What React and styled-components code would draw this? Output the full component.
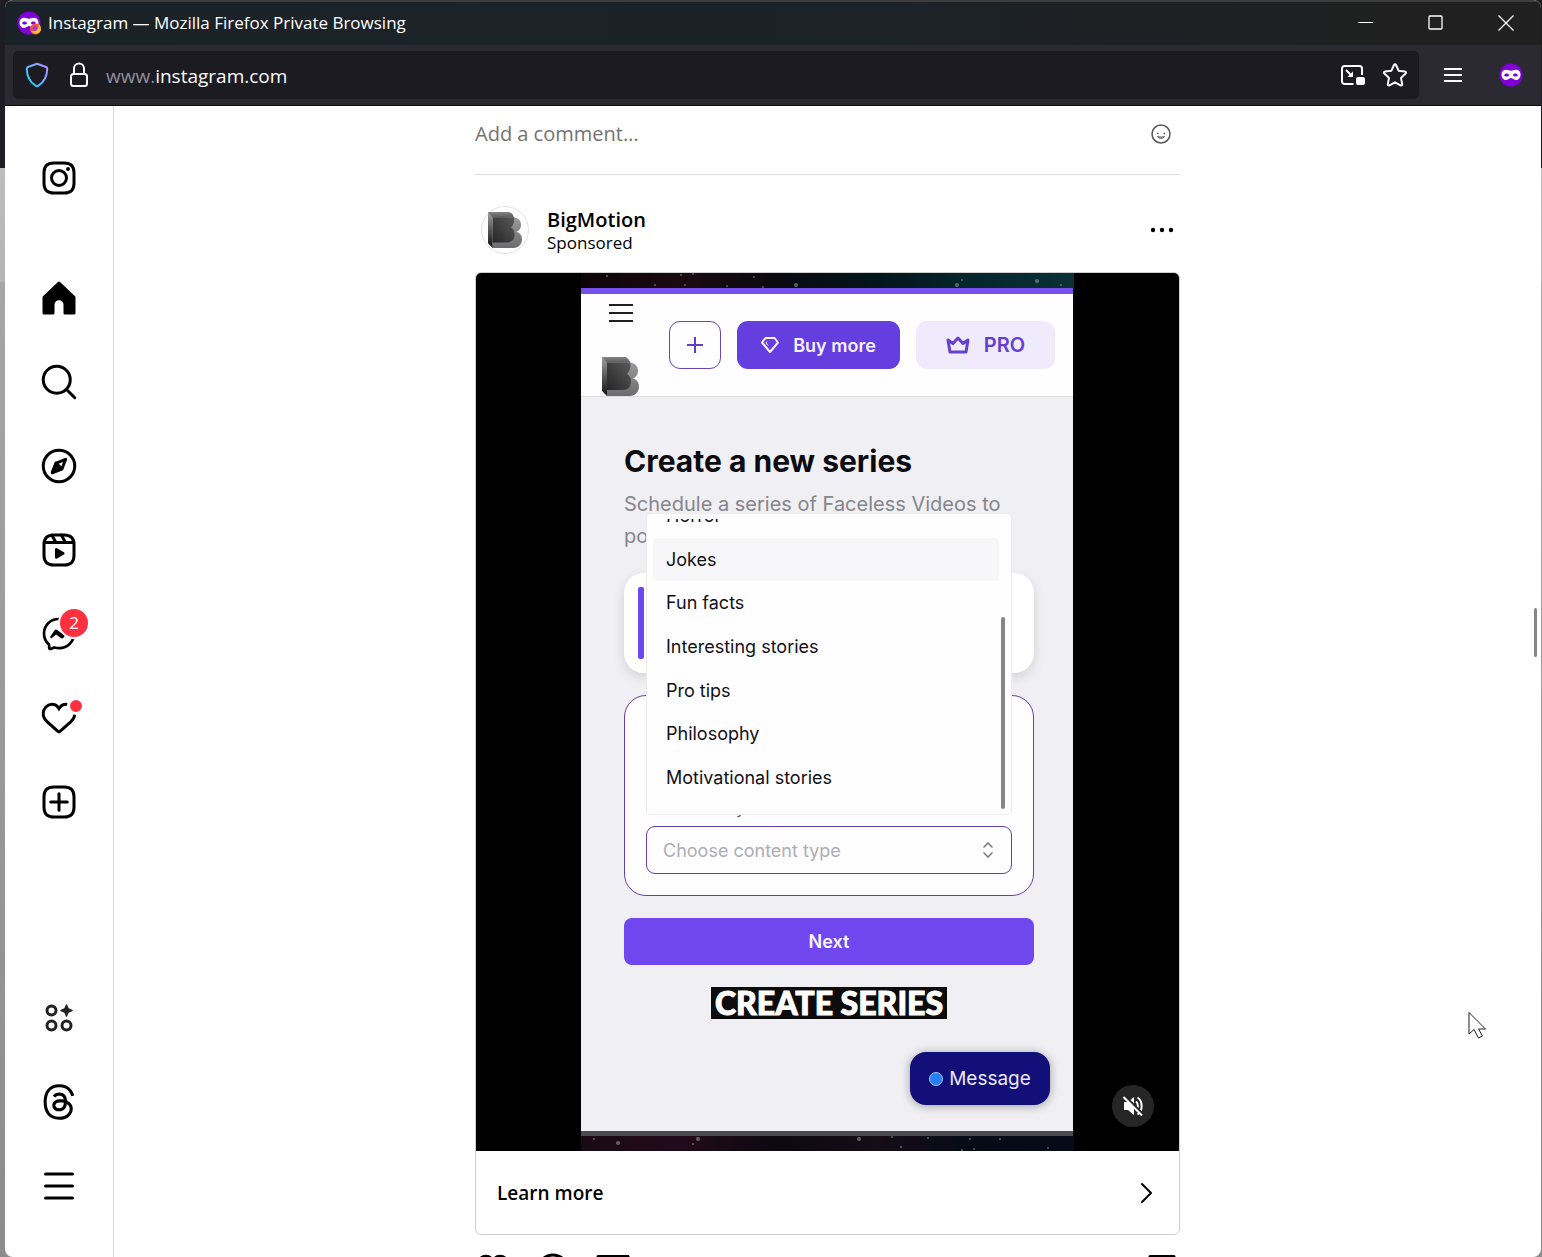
import React from 'react'
import styled, { createGlobalStyle, css } from 'styled-components'
import { FaThreads } from 'react-icons/fa6'

const uiFont = `'Open Sans', 'Noto Sans', sans-serif`
const appFont = `Inter, 'Liberation Sans', sans-serif`

const GlobalStyle = createGlobalStyle`
  *, *::before, *::after {
    box-sizing: border-box;
  }
  body {
    margin: 0;
    font-family: ${uiFont};
    color: #000;
  }
  button, input, select {
    font: inherit;
    color: inherit;
    margin: 0;
    padding: 0;
    border: 0;
    background: none;
  }
  svg {
    display: block;
    flex-shrink: 0;
  }
`

/* window */

const Desktop = styled.div`
  height: 100vh;
  padding: 0 1px 0 5px;
  overflow: hidden;
  background: linear-gradient(#1e1d25 168px, #bdbdbd 168px, #b4b4b4 282px, #a6a6a6 282px, #8c8c8c 1257px);
`
const Window = styled.div`
  position: relative;
  height: 100%;
  display: flex;
  flex-direction: column;
  overflow: hidden;
  border-radius: 8px;
  background: #fff;
`
const TitleBar = styled.header`
  height: 45px;
  flex-shrink: 0;
  display: flex;
  align-items: center;
  border-top: 2px solid #3c3c3c;
  padding: 0 0 2px 12px;
  background: linear-gradient(90deg, #1a2229, #1c2227 60%, #202020 90%);
  color: #fff;
`
const WindowTitle = styled.span`
  flex: 1;
  margin-left: 7px;
  font-size: 17px;
  line-height: 24px;
`
const CaptionButton = styled.button`
  width: 70px;
  height: 40px;
  display: grid;
  place-items: center;
`
const Toolbar = styled.div`
  height: 61px;
  flex-shrink: 0;
  display: flex;
  align-items: center;
  padding: 0 1px 0 8px;
  border-bottom: 1px solid #0c0c0d;
  background: #2b2a33;
  color: #fbfbfe;
`
const UrlBar = styled.div`
  flex: 1;
  height: 48px;
  display: flex;
  align-items: center;
  margin-right: 5px;
  padding: 0 11px;
  border-radius: 5px;
  background: #1c1b22;
`
const UrlButton = styled.button`
  width: 26px;
  height: 32px;
  margin-right: ${props => props.$gap || 0}px;
  display: grid;
  place-items: center;
`
const Address = styled.div`
  flex: 1;
  padding-top: 2px;
  font-size: 19px;
  line-height: 28px;
  span {
    color: #8f8f9d;
  }
`
const ToolbarButton = styled.button`
  width: 58px;
  height: 48px;
  display: grid;
  place-items: center;
`

/* page */

const Page = styled.div`
  flex: 1;
  min-height: 0;
  display: flex;
`
const Sidebar = styled.nav`
  width: 109px;
  flex-shrink: 0;
  display: flex;
  flex-direction: column;
  padding: 30px 0 29px;
  border-right: 1px solid #dbdbdb;
`
const SideLink = styled.a`
  height: 84px;
  display: grid;
  place-items: center;
  color: #000;
  margin-top: ${props => (props.$push ? 'auto' : 0)};
  margin-bottom: ${props => (props.$logo ? 36 : 0)}px;
`
const IconBox = styled.span`
  position: relative;
`
const CountBadge = styled.span`
  position: absolute;
  top: -9px;
  right: -13px;
  width: 32px;
  height: 32px;
  border: 2px solid #fff;
  border-radius: 50%;
  background: #ff3040;
  color: #fff;
  font-size: 17px;
  line-height: 28px;
  text-align: center;
`
const DotBadge = styled.span`
  position: absolute;
  top: -3px;
  right: -8px;
  width: 18px;
  height: 18px;
  border: 3px solid #fff;
  border-radius: 50%;
  background: #ff3040;
`
const Main = styled.main`
  flex: 1;
  min-width: 0;
  display: flex;
  justify-content: center;
  overflow: hidden;
`
const Feed = styled.div`
  width: 100%;
  max-width: 705px;
`
const CommentRow = styled.form`
  display: flex;
  align-items: center;
  height: 69px;
  padding: 0 9px 12px 0;
  border-bottom: 1px solid #dbdbdb;
`
const CommentInput = styled.input`
  flex: 1;
  font-size: 20px;
  line-height: 28px;
  outline: none;
  &::placeholder {
    color: #737373;
    opacity: 1;
  }
`
const PostHeader = styled.div`
  display: flex;
  align-items: center;
  padding: 31px 6px 18px;
`
const Avatar = styled.span`
  width: 48px;
  height: 48px;
  display: grid;
  place-items: center;
  border: 1px solid #e2e2e2;
  border-radius: 50%;
`
const PostMeta = styled.div`
  flex: 1;
  margin-left: 18px;
  padding-top: 2px;
`
const Author = styled.a`
  display: block;
  color: #000;
  font-size: 20px;
  font-weight: 600;
  line-height: 24px;
  text-decoration: none;
`
const Sponsored = styled.span`
  display: block;
  font-size: 17px;
  line-height: 22px;
`
const Card = styled.section`
  border: 1px solid #cfcfcf;
  border-radius: 6px;
  overflow: hidden;
`
const LearnMore = styled.a`
  height: 83px;
  display: flex;
  align-items: center;
  justify-content: space-between;
  padding: 0 24px 0 21px;
  color: #000;
  font-size: 19px;
  font-weight: 600;
  text-decoration: none;
`
const PostActions = styled.div`
  display: flex;
  gap: 24px;
  padding-top: 17px;
  button:last-child {
    margin-left: auto;
  }
`

/* video */

const Video = styled.div`
  position: relative;
  height: 878px;
  display: flex;
  justify-content: center;
  background: #000;
`
const Clip = styled.div`
  width: 493px;
  display: flex;
  flex-direction: column;
`
const Sky = styled.svg`
  width: 100%;
  height: 15px;
`
const Screen = styled.div`
  position: relative;
  flex: 1;
  display: flex;
  flex-direction: column;
  margin: 0 1px 0 0;
  border-top: 6px solid #7650ec;
  border-bottom: 5px solid #4c4a50;
  background: #f0eff4;
  font-family: ${appFont};
`
const ScreenHeader = styled.div`
  height: 103px;
  display: flex;
  align-items: center;
  gap: 16px;
  padding: 0 18px 0 21px;
  border-bottom: 1px solid #dedde2;
  background: #fefdff;
`
const Brand = styled.div`
  align-self: stretch;
  display: flex;
  flex-direction: column;
  align-items: center;
  justify-content: space-between;
  margin-right: 14px;
  padding-top: 8px;
`
const HeaderButton = styled.button`
  height: 48px;
  display: flex;
  align-items: center;
  justify-content: center;
  gap: 14px;
  border-radius: 11px;
  font-weight: 600;
  ${props =>
    props.$kind === 'add' &&
    css`
      width: 52px;
      border: 1px solid #6747b4;
      color: #5f3fc4;
    `}
  ${props =>
    props.$kind === 'buy' &&
    css`
      width: 163px;
      background: #653ee0;
      color: #f6f0ff;
      font-size: 18px;
    `}
  ${props =>
    props.$kind === 'pro' &&
    css`
      flex: 1;
      background: #f0eafd;
      color: #6540cf;
      font-size: 20px;
    `}
`
const Series = styled.div`
  flex: 1;
  display: flex;
  flex-direction: column;
  padding: 46px 39px 0 43px;
`
const SeriesTitle = styled.h2`
  margin: 0;
  color: #0b0b10;
  font-size: 30px;
  font-weight: 700;
  line-height: 36px;
`
const SeriesText = styled.p`
  margin: 9px 0 0;
  color: #85858b;
  font-size: 20px;
  line-height: 32px;
`
const StepCard = styled.div`
  height: 100px;
  margin-top: 21px;
  padding: 14px;
  border-radius: 20px;
  background: #fff;
  box-shadow: 0 4px 12px rgba(0, 0, 0, 0.12);
`
const StepMark = styled.div`
  width: 6px;
  height: 72px;
  border-radius: 2px;
  background: #6f47ee;
`
const FieldCard = styled.div`
  height: 201px;
  display: flex;
  flex-direction: column;
  justify-content: flex-end;
  margin-top: 22px;
  padding: 0 21px 21px;
  border: 1px solid #6240ac;
  border-radius: 22px;
  background: #fefdff;
`
const FieldLabel = styled.label`
  margin-bottom: 8px;
  color: #55555c;
  font-size: 16px;
  line-height: 20px;
`
const Field = styled.div`
  position: relative;
`
const ContentSelect = styled.select`
  width: 100%;
  height: 48px;
  padding: 0 16px;
  border: 1px solid #6240ac;
  border-radius: 9px;
  background: #fefdff;
  color: #adadb3;
  font-size: 18px;
  appearance: none;
`
const Chevrons = styled.svg`
  position: absolute;
  top: 16px;
  right: 19px;
  pointer-events: none;
`
const Menu = styled.div`
  position: absolute;
  right: 0;
  bottom: calc(100% + 11px);
  left: 0;
  height: 302px;
  display: flex;
  padding: 5px 6px;
  border: 1px solid #ececf0;
  border-radius: 5px;
  background: #fefdff;
`
const MenuScroll = styled.div`
  flex: 1;
  display: flex;
  flex-direction: column;
  justify-content: flex-end;
  padding-bottom: 10px;
  overflow: hidden;
`
const MenuList = styled.ul`
  height: 305px;
  flex-shrink: 0;
  display: grid;
  grid-auto-rows: 1fr;
  margin: 0;
  padding: 0;
  list-style: none;
`
const MenuItem = styled.li`
  display: flex;
  align-items: center;
  padding: 0 13px;
  border-radius: 4px;
  background: ${props => (props.$active ? '#f7f7fa' : 'transparent')};
  color: #111116;
  font-size: 18px;
`
const MenuThumb = styled.div`
  align-self: flex-end;
  width: 4px;
  height: 192px;
  margin-left: 2px;
  border-radius: 2px;
  background: #85858a;
`
const NextButton = styled.button`
  height: 47px;
  margin-top: 22px;
  border-radius: 8px;
  background: #7047ee;
  color: #f8f4ff;
  font-size: 18px;
  font-weight: 600;
`
const Subtitle = styled.span`
  align-self: center;
  height: 32px;
  margin-top: 22px;
  padding: 0 4px;
  background: #0c0c0c;
  color: #fff;
  font-family: Lato, sans-serif;
  font-size: 32px;
  font-weight: 900;
  line-height: 32px;
  -webkit-text-stroke: 1px #fff;
`
const MessageButton = styled.button`
  position: absolute;
  right: 23px;
  bottom: 26px;
  width: 140px;
  height: 53px;
  display: flex;
  align-items: center;
  justify-content: center;
  gap: 6px;
  border-radius: 16px;
  background: #130f78;
  color: #e9e8fb;
  font-size: 19px;
  box-shadow: 0 1px 10px rgba(0, 0, 0, 0.35);
`
const OnlineDot = styled.span`
  width: 14px;
  height: 14px;
  border: 1px solid #9fc4ff;
  border-radius: 50%;
  background: #2680f5;
`
const MuteButton = styled.button`
  position: absolute;
  right: 25px;
  bottom: 24px;
  width: 42px;
  height: 42px;
  display: grid;
  place-items: center;
  border-radius: 50%;
  background: #262626;
`

/* overlays */

const ScrollThumb = styled.div`
  position: absolute;
  top: 608px;
  right: 4px;
  width: 3px;
  height: 49px;
  border-radius: 2px;
  background: #858585;
`
const Pointer = styled.svg`
  position: absolute;
  top: 1011px;
  right: 54px;
`

const Icon = ({ size = 36, width = 2, children }) => (
  <svg
    width={size}
    height={size}
    viewBox="0 0 24 24"
    fill="none"
    stroke="currentColor"
    strokeWidth={width}
    strokeLinecap="round"
    strokeLinejoin="round"
    aria-hidden="true"
  >
    {children}
  </svg>
)

const roundedBox =
  'M2 12v3.45c0 2.849.698 4.005 1.606 4.944.94.909 2.098 1.608 4.946 1.608h6.896c2.848 0 4.006-.7 4.946-1.608C21.302 19.455 22 18.3 22 15.45V8.552c0-2.849-.698-4.006-1.606-4.945C19.454 2.7 18.296 2 15.448 2H8.552c-2.848 0-4.006.699-4.946 1.607C2.698 4.547 2 5.703 2 8.552Z'

const heart =
  'M16.792 3.904A4.989 4.989 0 0 1 21.5 9.122c0 3.072-2.652 4.959-5.197 7.222-2.512 2.243-3.865 3.469-4.303 3.752-.477-.309-2.143-1.823-4.303-3.752C5.141 14.072 2.5 12.167 2.5 9.122a4.989 4.989 0 0 1 4.708-5.218 4.21 4.21 0 0 1 3.675 1.941c.84 1.175.98 1.763 1.12 1.763s.278-.588 1.11-1.766a4.17 4.17 0 0 1 3.679-1.938Zm0-2a6.04 6.04 0 0 0-4.797 2.127 6.052 6.052 0 0 0-4.787-2.127A6.985 6.985 0 0 0 .5 9.122c0 3.61 2.55 5.827 5.015 7.97.283.246.569.494.853.747l1.027.918a44.998 44.998 0 0 0 3.518 3.018 2 2 0 0 0 2.174 0 45.263 45.263 0 0 0 3.626-3.115l.922-.824c.293-.26.59-.519.885-.774 2.334-2.025 4.98-4.32 4.98-7.94a6.985 6.985 0 0 0-6.708-7.218Z'

const HeartIcon = () => (
  <Icon>
    <path d={heart} fill="currentColor" stroke="none" />
  </Icon>
)

const navItems = [
  {
    label: 'Home',
    icon: (
      <Icon>
        <path
          fill="currentColor"
          stroke="none"
          d="M22 23h-6.001a1 1 0 0 1-1-1v-5.455a2.997 2.997 0 1 0-5.993 0V22a1 1 0 0 1-1 1H2a1 1 0 0 1-1-1V11.543a1.002 1.002 0 0 1 .31-.724l10-9.543a1.001 1.001 0 0 1 1.38 0l10 9.543a1.002 1.002 0 0 1 .31.724V22a1 1 0 0 1-1 1Z"
        />
      </Icon>
    )
  },
  {
    label: 'Search',
    icon: (
      <Icon>
        <circle cx="10.5" cy="10.5" r="9" />
        <path d="M17 17l5.5 5.5" />
      </Icon>
    )
  },
  {
    label: 'Explore',
    icon: (
      <Icon>
        <circle cx="12" cy="12" r="10.5" />
        <path d="M13.941 13.953L7.581 16.424 10.06 10.056 16.42 7.585Z" />
        <path d="M10.06 10.056L13.949 13.945 7.581 16.424Z" fill="currentColor" />
      </Icon>
    )
  },
  {
    label: 'Reels',
    icon: (
      <Icon>
        <path d={roundedBox} />
        <path d="M2.05 7h19.9M13.504 2l2.858 5M7.207 2.11L10.002 7" />
        <path
          fill="currentColor"
          stroke="none"
          d="M9.763 17.664a.908.908 0 0 1-.454-.787V11.63a.909.909 0 0 1 1.364-.788l4.545 2.624a.909.909 0 0 1 0 1.575l-4.545 2.624a.91.91 0 0 1-.91 0Z"
        />
      </Icon>
    )
  },
  {
    label: 'Messages',
    badge: <CountBadge>2</CountBadge>,
    icon: (
      <Icon width={1.8}>
        <path d="M12.003 2.001a9.705 9.705 0 1 1 0 19.4 10.876 10.876 0 0 1-2.895-.384.798.798 0 0 0-.533.04l-1.984.876a.801.801 0 0 1-1.123-.708l-.054-1.78a.806.806 0 0 0-.27-.569 9.49 9.49 0 0 1-3.14-7.175 9.65 9.65 0 0 1 10-9.7Z" />
        <path
          fill="currentColor"
          stroke="none"
          d="M17.79 10.132a.659.659 0 0 0-.962-.873l-2.556 2.05a.63.63 0 0 1-.758.002L11.06 9.47a1.576 1.576 0 0 0-2.277.42l-2.567 3.98a.659.659 0 0 0 .961.875l2.556-2.049a.63.63 0 0 1 .759-.002l2.452 1.84a1.576 1.576 0 0 0 2.278-.42Z"
        />
      </Icon>
    )
  },
  {
    label: 'Notifications',
    badge: <DotBadge />,
    icon: <HeartIcon />
  },
  {
    label: 'New post',
    icon: (
      <Icon>
        <path d={roundedBox} />
        <path d="M6.5 12h11M12 6.5v11" />
      </Icon>
    )
  }
]

const MaskIcon = ({ size = 24, firefox }) => (
  <svg width={size} height={size} viewBox="0 0 24 24" aria-hidden="true">
    <circle cx="12" cy="12" r="11.5" fill="#8000d7" />
    <path
      fill="#fff"
      fillRule="evenodd"
      d="M7.2 6.8c2 0 3.2.9 4.8.9s2.8-.9 4.8-.9c3 0 4.7 2 4.7 4.6 0 3-1.8 5.6-4.6 5.6-2.4 0-3.3-1.9-4.9-1.9S9.5 17 7.1 17c-2.8 0-4.6-2.6-4.6-5.6 0-2.6 1.7-4.6 4.7-4.6zM5 12c.6 1 1.5 1.5 2.6 1.5S9.600 13 10.200 12c-.6-1-1.500-1.600-2.600-1.600S5.600 11 5 12zm8.800 0c.6 1 1.500 1.500 2.600 1.500s2-.5 2.600-1.500c-.6-1-1.500-1.600-2.600-1.600s-2 .6-2.600 1.600z"
    />
    {firefox && (
      <>
        <circle cx="18.5" cy="18" r="5.5" fill="#ff4f3b" />
        <path d="M14 20c2 3 7 4 9.5 0 .8-2.5.4-5-2-7.5.6 3-.4 6-3.5 7.5z" fill="#ffbd30" />
        <circle cx="18" cy="17.5" r="2.4" fill="#9a3dd8" />
      </>
    )}
  </svg>
)

const BLogo = ({ id, width, height }) => (
  <svg width={width} height={height} viewBox="0 0 37 39" aria-hidden="true">
    <defs>
      <linearGradient id={id + 'Back'} x1="0" y1="0" x2="0" y2="1">
        <stop offset="0" stopColor="#858585" />
        <stop offset="1" stopColor="#5c5c5c" />
      </linearGradient>
      <linearGradient id={id + 'Front'} x1="1" y1="0" x2="0" y2="1">
        <stop offset="0" stopColor="#5a5a5a" />
        <stop offset="1" stopColor="#262628" />
      </linearGradient>
      <linearGradient id={id + 'Side'} x1="0" y1="0" x2="0" y2="1">
        <stop offset="0" stopColor="#a0a0a0" />
        <stop offset="1" stopColor="#101010" />
      </linearGradient>
      <linearGradient id={id + 'Lobe'} x1="0" y1="0" x2="0" y2="1">
        <stop offset="0" stopColor="#9a9a9a" />
        <stop offset="1" stopColor="#6c6c6e" />
      </linearGradient>
    </defs>
    <path
      d="M5 5.500H27c6 0 9 4 9 8.500 0 3.500-2 6-5 7.500 4 1 6 4 6 8C37 35 33 39 28 39H5z"
      fill={`url(#${id}Lobe)`}
    />
    <path d="M0 0H21c4 0 6 2 7 5.500H5V39L0 34z" fill={`url(#${id}Side)`} />
    <path d="M0 0H21c4 0 6 2 7 5.500H5z" fill={`url(#${id}Back)`} />
    <path
      d="M5 5.500H28.500c.5 5-1 9-3.500 11.500 3 1.500 4 4.500 4 7.500 0 5-3 8.500-8 8.500H5z"
      fill={`url(#${id}Front)`}
    />
  </svg>
)

const stars = [
  [26, 3, 1], [74, 12, 1], [100, 2, 1], [104, 12, 1], [112, 1, 1], [146, 13, 1], [173, 4, 1],
  [182, 14, 1], [215, 12, 2], [376, 12, 2], [381, 7, 1], [456, 8, 2], [480, 12, 1]
]

const StarStrip = ({ id, colors, flip }) => (
  <Sky viewBox="0 0 493 15" preserveAspectRatio="none" aria-hidden="true">
    <defs>
      <linearGradient id={id}>
        {colors.map((color, i) => (
          <stop key={i} offset={i / (colors.length - 1)} stopColor={color} />
        ))}
      </linearGradient>
    </defs>
    <rect width="493" height="15" fill={`url(#${id})`} />
    {stars.map(([x, y, r]) => (
      <circle key={x} cx={flip ? 493 - x : x} cy={flip ? 15 - y : y} r={r} fill="#9aa5a0" opacity="0.55" />
    ))}
  </Sky>
)

const options = ['Horror', 'Jokes', 'Fun facts', 'Interesting stories', 'Pro tips', 'Philosophy', 'Motivational stories']

const BrowserChrome = () => (
  <>
    <TitleBar>
      <MaskIcon firefox />
      <WindowTitle>Instagram — Mozilla Firefox Private Browsing</WindowTitle>
      <CaptionButton aria-label="Minimize">
        <svg width="16" height="16" stroke="#fff"><path d="M0 7.500h15" /></svg>
      </CaptionButton>
      <CaptionButton aria-label="Maximize">
        <svg width="16" height="16" stroke="#fff" fill="none"><rect x="1" y="1" width="13" height="13" rx="1" strokeWidth="1.300" /></svg>
      </CaptionButton>
      <CaptionButton aria-label="Close">
        <svg width="16" height="16" stroke="#fff" strokeWidth="1.300"><path d="M.5.5l15 15M15.500.5l-15 15" /></svg>
      </CaptionButton>
    </TitleBar>
    <Toolbar>
      <UrlBar>
        <UrlButton aria-label="Tracking protection" $gap={16}>
          <svg width="24" height="26" viewBox="0 0 24 26" fill="none">
            <defs>
              <linearGradient id="shield" x1="0" y1="1" x2="1" y2="0">
                <stop offset="0.2" stopColor="#2ccdff" />
                <stop offset="0.6" stopColor="#7aa8ff" />
                <stop offset="1" stopColor="#c08cff" />
              </linearGradient>
            </defs>
            <path
              d="M12 1.800L21 5c.9.3 1.300 1 1.200 2-.2 7.500-3 13-8.700 16.600-1 .7-2 .7-3 0C4.800 20 2 14.500 1.800 7c0-1 .3-1.700 1.200-2z"
              stroke="url(#shield)"
              strokeWidth="2"
              strokeLinejoin="round"
            />
          </svg>
        </UrlButton>
        <UrlButton aria-label="Site information" $gap={14}>
          <svg width="20" height="26" viewBox="0 0 20 26" fill="none" stroke="#fbfbfe" strokeWidth="2">
            <rect x="2" y="12" width="16" height="12" rx="2.500" />
            <path d="M5 12V6.500a5 5 0 0 1 10 0V12" />
          </svg>
        </UrlButton>
        <Address role="textbox" aria-label="Address">
          <span>www.</span>instagram.com
        </Address>
        <UrlButton aria-label="Picture in picture" $gap={16}>
          <svg width="26" height="24" viewBox="0 0 26 24" fill="none" stroke="#fbfbfe" strokeWidth="2">
            <path d="M13.500 21H4.500A2.500 2.500 0 0 1 2 18.500v-13A2.500 2.500 0 0 1 4.500 3h15A2.500 2.500 0 0 1 22 5.500V12" />
            <path d="M6 7l6 6" />
            <path d="M13 8.500V14H7.500z" fill="#fbfbfe" stroke="none" />
            <rect x="16" y="14" width="9" height="8" rx="2" fill="#fbfbfe" stroke="none" />
          </svg>
        </UrlButton>
        <UrlButton aria-label="Bookmark this page">
          <svg width="26" height="26" viewBox="0 0 26 26" fill="none" stroke="#fbfbfe" strokeWidth="2" strokeLinejoin="round">
            <path d="M13 2.300c.5 0 .8.3 1 .7l2.600 5.700 6.300.8c1.200.2 1.500 1.200.7 2l-4.600 4.400 1.200 6.200c.2 1.100-.7 1.700-1.700 1.200L13 20.300l-5.500 3c-1 .5-1.900-.1-1.700-1.200L7 15.900l-4.600-4.400c-.8-.8-.5-1.800.7-2l6.300-.8L12 3c.2-.4.5-.7 1-.7z" />
          </svg>
        </UrlButton>
      </UrlBar>
      <ToolbarButton aria-label="Open application menu">
        <svg width="18" height="16" stroke="#fbfbfe" strokeWidth="2"><path d="M0 2h18M0 8h18M0 14h18" /></svg>
      </ToolbarButton>
      <ToolbarButton aria-label="Private window">
        <MaskIcon />
      </ToolbarButton>
    </Toolbar>
  </>
)

const SideNav = () => (
  <Sidebar>
    <SideLink href="#" aria-label="Instagram" $logo>
      <Icon>
        <path d={roundedBox} />
        <circle cx="12" cy="12" r="5" />
        <circle cx="18" cy="6" r="1.300" fill="currentColor" stroke="none" />
      </Icon>
    </SideLink>
    {navItems.map(item => (
      <SideLink key={item.label} href="#" aria-label={item.label}>
        <IconBox>
          {item.icon}
          {item.badge}
        </IconBox>
      </SideLink>
    ))}
    <SideLink href="#" aria-label="Also from Meta" $push>
      <svg width="36" height="36" fill="none" stroke="#222" strokeWidth="3">
        <circle cx="10.500" cy="10.500" r="4.500" />
        <circle cx="10.500" cy="25.500" r="4.500" />
        <circle cx="25.500" cy="25.500" r="4.500" />
        <path d="M25.500 5c1 3.500 2 4.500 5.500 5.500-3.500 1-4.500 2-5.500 5.500-1-3.500-2-4.500-5.500-5.500 3.500-1 4.500-2 5.500-5.500z" fill="#222" strokeWidth="1.500" strokeLinejoin="round" />
      </svg>
    </SideLink>
    <SideLink href="#" aria-label="Threads">
      <FaThreads size={38} />
    </SideLink>
    <SideLink href="#" aria-label="More">
      <Icon>
        <path d="M3 4h18M3 12h18M3 20h18" />
      </Icon>
    </SideLink>
  </Sidebar>
)

const AdVideo = () => (
  <Video>
    <Clip>
      <StarStrip id="skyTop" colors={['#0c0508', '#1a0a10', '#0a0a10', '#03151c', '#06262e', '#0a3038']} />
      <Screen>
        <ScreenHeader>
          <Brand>
            <svg width="24" height="20" stroke="#1d1d22" strokeWidth="2"><path d="M0 3h24M0 11h24M0 19h24" /></svg>
            <BLogo id="brand" width={37} height={39} />
          </Brand>
          <HeaderButton $kind="add" aria-label="Add">
            <svg width="16" height="16" stroke="currentColor" strokeWidth="2"><path d="M8 0v16M0 8h16" /></svg>
          </HeaderButton>
          <HeaderButton $kind="buy">
            <svg width="18" height="16" viewBox="0 0 18 16" fill="none" stroke="currentColor" strokeWidth="2" strokeLinejoin="round">
              <path d="M4.500 1h9L17 5.500 9 15 1 5.500z" />
              <path d="M6 4.500L5 6l2 2.500" strokeWidth="1" />
            </svg>
            Buy more
          </HeaderButton>
          <HeaderButton $kind="pro">
            <svg width="24" height="18" viewBox="0 0 24 18" fill="none" stroke="currentColor" strokeWidth="3" strokeLinejoin="round">
              <path d="M2 4l5 3.500L12 2l5 5.500L22 4l-2 12H4z" />
            </svg>
            PRO
          </HeaderButton>
        </ScreenHeader>
        <Series>
          <SeriesTitle>Create a new series</SeriesTitle>
          <SeriesText>
            Schedule a series of Faceless Videos to
            <br />
            post
          </SeriesText>
          <StepCard>
            <StepMark />
          </StepCard>
          <FieldCard>
            <FieldLabel htmlFor="content">Choose a style</FieldLabel>
            <Field>
              <ContentSelect id="content" defaultValue="">
                <option value="">Choose content type</option>
                {options.map(name => (
                  <option key={name}>{name}</option>
                ))}
              </ContentSelect>
              <Chevrons width="10" height="16" fill="none" stroke="#77777d" strokeWidth="1.500" strokeLinecap="round">
                <path d="M1 5l4-4 4 4M1 11l4 4 4-4" />
              </Chevrons>
              <Menu>
                <MenuScroll>
                  <MenuList>
                    {options.map(name => (
                      <MenuItem key={name} $active={name === 'Jokes'}>
                        {name}
                      </MenuItem>
                    ))}
                  </MenuList>
                </MenuScroll>
                <MenuThumb />
              </Menu>
            </Field>
          </FieldCard>
          <NextButton>Next</NextButton>
          <Subtitle>CREATE SERIES</Subtitle>
        </Series>
        <MessageButton>
          <OnlineDot />
          Message
        </MessageButton>
      </Screen>
      <StarStrip id="skyBottom" flip colors={['#1a0a14', '#220a1c', '#0d0810', '#150d18', '#060b16', '#050b18']} />
    </Clip>
    <MuteButton aria-label="Toggle audio">
      <svg width="20" height="20" viewBox="0 0 20 20" fill="none" stroke="#fff" strokeWidth="2">
        <path d="M1 6v8h4l6 5V1L5 6z" fill="#fff" stroke="none" />
        <path d="M13 5.500c2.500 2 2.500 7 0 9M14.500 1.500c5.500 3.500 5.500 13.500 0 17" />
        <path d="M1.500 0L21 19.500" stroke="#262626" strokeWidth="3" />
        <path d="M.5 1L19 19.500" />
      </svg>
    </MuteButton>
  </Video>
)

const Post = () => (
  <article>
    <PostHeader>
      <Avatar>
        <BLogo id="avatar" width={34} height={36} />
      </Avatar>
      <PostMeta>
        <Author href="#">BigMotion</Author>
        <Sponsored>Sponsored</Sponsored>
      </PostMeta>
      <button aria-label="More options">
        <svg width="24" height="24"><circle cx="3" cy="12" r="2.200" /><circle cx="12" cy="12" r="2.200" /><circle cx="21" cy="12" r="2.200" /></svg>
      </button>
    </PostHeader>
    <Card>
      <AdVideo />
      <LearnMore href="#">
        Learn more
        <svg width="18" height="22" fill="none" stroke="currentColor" strokeWidth="2" strokeLinecap="round" strokeLinejoin="round">
          <path d="M5 2l9 9-9 9" />
        </svg>
      </LearnMore>
    </Card>
    <PostActions>
      <button aria-label="Like"><HeartIcon /></button>
      <button aria-label="Comment">
        <Icon><path d="M20.656 17.008a9.993 9.993 0 1 0-3.590 3.615L22 22Z" /></Icon>
      </button>
      <button aria-label="Share">
        <Icon><path d="M22 3L9.218 10.083M11.698 20.334L22 3.001 2 3.001 9.218 10.084Z" /></Icon>
      </button>
      <button aria-label="Save">
        <Icon><path d="M20 21l-8-7.560L4 21V3h16z" /></Icon>
      </button>
    </PostActions>
  </article>
)

const App = () => (
  <Desktop>
    <GlobalStyle />
    <Window>
      <BrowserChrome />
      <Page>
        <SideNav />
        <Main>
          <Feed>
            <CommentRow>
              <CommentInput placeholder="Add a comment…" aria-label="Add a comment" />
              <button type="button" aria-label="Emoji">
                <svg width="20" height="20" fill="none" stroke="#555">
                  <circle cx="10" cy="10" r="9" strokeWidth="1.500" />
                  <path d="M6.500 12.500c1.500 2.300 5.500 2.300 7 0-2 .8-5 .8-7 0z" strokeLinejoin="round" />
                  <path d="M6 9.500h1.500M12.500 9.500H14" strokeWidth="1.500" />
                </svg>
              </button>
            </CommentRow>
            <Post />
          </Feed>
        </Main>
      </Page>
      <ScrollThumb />
      <Pointer width="19" height="29" viewBox="0 0 19 29" fill="#fff" stroke="#1b1b2b" aria-hidden="true">
        <path d="M1 1.500V23l5-4.500 4.500 8.500 4-2-4-7h7z" />
      </Pointer>
    </Window>
  </Desktop>
)

export default App
